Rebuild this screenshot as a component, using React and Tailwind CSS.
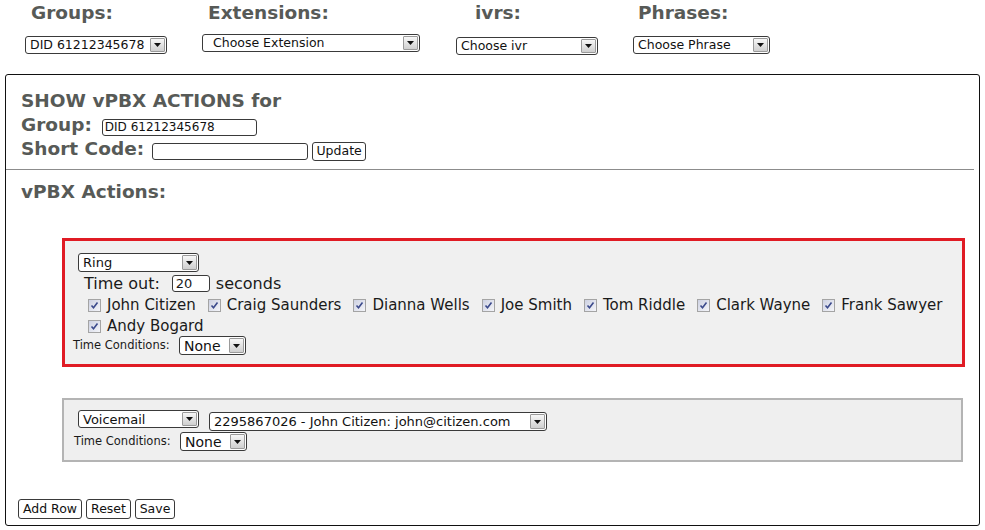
import React from "react";

const FONT = { fontFamily: '"DejaVu Sans", Verdana, sans-serif' };

function Arrow() {
  return (
    <span className="flex w-[15px] m-[1px] items-center justify-center rounded-[1px] border border-[#9a9a9a] bg-gradient-to-b from-[#f7f7f7] to-[#cfcfcf]">
      <svg width="7" height="4" viewBox="0 0 7 4">
        <path d="M0 0 H7 L3.5 4 Z" fill="#111" />
      </svg>
    </span>
  );
}

function Sel({ className, text, textCls = "text-[12.5px] pl-[4px]" }) {
  return (
    <div className={`flex items-stretch bg-white border border-[#3a3a3a] rounded-[3px] ${className}`}>
      <span className={`flex-1 flex items-center leading-none text-[#111] whitespace-nowrap overflow-hidden ${textCls}`}>{text}</span>
      <Arrow />
    </div>
  );
}

function Check({ label }) {
  return (
    <span className="flex items-center h-[21px]">
      <span className="flex items-center justify-center w-[13px] h-[13px] border border-[#a4a4a4] bg-gradient-to-br from-[#cdd1e2] to-[#f4f5f9] mr-[6px]">
        <svg width="9" height="9" viewBox="0 0 9 9">
          <path d="M1.5 4.5 L3.5 6.8 L7.5 1.5" stroke="#3b4a8c" strokeWidth="1.6" fill="none" />
        </svg>
      </span>
      <span className="text-[15px] text-[#1a1a1a] leading-none">{label}</span>
    </span>
  );
}

function Btn({ children, className }) {
  return (
    <span className={`inline-flex items-center justify-center px-[2px] border border-[#3a3a3a] rounded-[3px] bg-white text-[12.5px] text-[#111] leading-none whitespace-nowrap ${className}`}>
      {children}
    </span>
  );
}

function TimeCond({ cls }) {
  return (
    <div className={`flex items-center ${cls}`}>
      <span className="text-[11.5px] text-[#1a1a1a] w-[106px] whitespace-nowrap">Time Conditions:</span>
      <Sel className="w-[67px] h-[19px]" text="None" textCls="text-[14px] pl-[4px]" />
    </div>
  );
}

export default function App() {
  const names = [
    "John Citizen",
    "Craig Saunders",
    "Dianna Wells",
    "Joe Smith",
    "Tom Riddle",
    "Clark Wayne",
    "Frank Sawyer",
    "Andy Bogard",
  ];
  const head = "text-[18.5px] font-bold text-[#575a57] leading-[26px]";
  return (
    <div className="w-[985px] h-[530px] bg-white overflow-hidden" style={FONT}>
      {/* top selectors */}
      <div className="flex pl-[25px]">
        <div className="w-[177px] flex flex-col">
          <div className={`pl-[6px] h-[36px] ${head}`}>Groups:</div>
          <Sel className="w-[142px] h-[18px]" text="DID 61212345678" />
        </div>
        <div className="w-[254px] flex flex-col">
          <div className={`pl-[6px] h-[34px] ${head}`}>Extensions:</div>
          <Sel className="w-[218px] h-[18px]" text="Choose Extension" textCls="text-[12.5px] pl-[10px]" />
        </div>
        <div className="w-[177px] flex flex-col">
          <div className={`pl-[19px] h-[37px] ${head}`}>ivrs:</div>
          <Sel className="w-[142px] h-[18px]" text="Choose ivr" />
        </div>
        <div className="w-[177px] flex flex-col">
          <div className={`pl-[5px] h-[36px] ${head}`}>Phrases:</div>
          <Sel className="w-[137px] h-[18px]" text="Choose Phrase" />
        </div>
      </div>

      {/* main panel */}
      <div className="ml-[5px] mt-[19px] w-[975px] h-[452px] border border-[#111] rounded-[3px] flex flex-col">
        <div className="pl-[15px] pt-[14px] text-[18.5px] font-bold text-[#575a57]">
          <div className="h-[24px] leading-[24px]">SHOW vPBX ACTIONS for</div>
          <div className="h-[24px] flex items-center">
            <span className="leading-[24px]">Group:</span>
            <span className="ml-[10px] mt-[4px] w-[155px] h-[17px] border border-[#3a3a3a] rounded-[3px] bg-white flex items-center pl-[2px] text-[12px] font-normal text-[#111] leading-none">DID 61212345678</span>
          </div>
          <div className="h-[24px] flex items-center">
            <span className="leading-[24px]">Short Code:</span>
            <span className="ml-[8px] mt-[4px] w-[156px] h-[17px] border border-[#3a3a3a] rounded-[3px] bg-white"></span>
            <Btn className="ml-[4px] mt-[4px] font-normal w-[54px] h-[19px]">Update</Btn>
          </div>
        </div>
        <div className="mt-[8px] mr-[5px] h-px bg-[#8c8c8c]"></div>
        <div className="pl-[15px] mt-[10px] h-[24px] leading-[24px] text-[18.5px] font-bold text-[#575a57]">vPBX Actions:</div>

        {/* red box */}
        <div className="ml-[56px] mt-[34px] w-[903px] border-[3px] border-[#e01b24] bg-[#f0f0f0] pt-[12px] pb-[9px]">
          <Sel className="ml-[13px] w-[121px] h-[19px]" text="Ring" textCls="text-[13px] pl-[4px]" />
          <div className="pl-[19px] h-[23px] flex items-center text-[16px] text-[#1a1a1a]">
            <span>Time out:</span>
            <span className="ml-[12px] w-[38px] h-[17px] border border-[#3a3a3a] rounded-[3px] bg-white flex items-center pl-[3px] text-[13px] leading-none">20</span>
            <span className="ml-[6px]">seconds</span>
          </div>
          <div className="pl-[23px] flex flex-wrap gap-x-[12px]">
            {names.map((n) => (
              <Check key={n} label={n} />
            ))}
          </div>
          <TimeCond cls="pl-[8px] -mt-[1px]" />
        </div>

        {/* gray box */}
        <div className="ml-[56px] mt-[31px] w-[901px] border-2 border-[#b4b4b4] bg-[#efefef] pt-[10px] pb-[9px]">
          <div className="flex items-start pl-[14px]">
            <Sel className="w-[121px] h-[18px]" text="Voicemail" textCls="text-[13px] pl-[4px]" />
            <Sel className="ml-[10px] mt-[2px] w-[338px] h-[19px]" text="2295867026 - John Citizen: john@citizen.com" textCls="text-[13px] pl-[4px]" />
          </div>
          <TimeCond cls="pl-[10px] mt-[1px]" />
        </div>

        <div className="mt-auto mb-[6px] pl-[12px] flex gap-[4px]">
          <Btn className="w-[64px] h-[20px]">Add Row</Btn>
          <Btn className="w-[45px] h-[20px]">Reset</Btn>
          <Btn className="w-[40px] h-[20px]">Save</Btn>
        </div>
      </div>
    </div>
  );
}
